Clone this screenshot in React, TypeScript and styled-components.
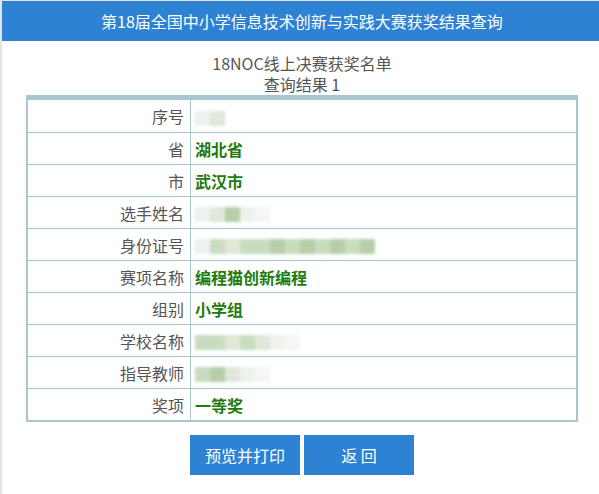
import React from 'react';
import styled, { createGlobalStyle } from 'styled-components';

const GlobalStyle = createGlobalStyle`
  html, body {
    margin: 0;
    padding: 0;
    background: #fff;
    overflow: hidden;
  }
  body {
    font-family: "Noto Sans CJK SC", "Noto Sans", "Liberation Sans", sans-serif;
    font-size: 16px;
  }
`;

const blue = '#2e82d3';
const line = '#a8c6d2';

const Page = styled.div`
  width: 600px;
  min-height: 494px;
  border-left: 2px solid #e4e4e4;
  border-top: 1px solid #e4e4e4;
`;

const Header = styled.div`
  height: 40px;
  background: ${blue};
  color: #fff;
  font-size: 16px;
  display: flex;
  align-items: center;
  justify-content: center;
`;

const Caption = styled.div`
  padding-top: 12px;
  text-align: center;
  color: #555;
  font-size: 16px;
  line-height: 21px;
`;

const ResultTable = styled.div`
  width: 552px;
  margin: 0 auto;
  box-sizing: border-box;
  border-top: 5px solid ${line};
  border-left: 2px solid ${line};
  border-right: 2px solid ${line};
  border-bottom: 2px solid ${line};
`;

const Row = styled.div`
  display: grid;
  grid-template-columns: 163px 1fr;
  height: 32px;
  box-sizing: border-box;
  & + & {
    border-top: 1px solid ${line};
  }
`;

const Label = styled.div`
  display: flex;
  align-items: center;
  justify-content: flex-end;
  padding-right: 6px;
  color: #555;
  border-right: 1px solid ${line};
  white-space: nowrap;
`;

const Value = styled.div`
  display: flex;
  align-items: center;
  padding-left: 4px;
  color: #237a0c;
  font-weight: bold;
`;

const Smudge = styled.div`
  display: flex;
  margin-top: 4px;
  filter: blur(1.4px);
`;

const Tile = styled.span<{ $tone: string }>`
  width: 15px;
  height: 15px;
  background: ${(p) => p.$tone};
`;

const Buttons = styled.div`
  display: flex;
  justify-content: center;
  gap: 4px;
  margin-top: 13px;
`;

const Button = styled.button`
  width: 110px;
  height: 40px;
  border: none;
  background: ${blue};
  color: #fff;
  font-family: inherit;
  font-size: 16px;
  padding: 0;
  cursor: pointer;
`;

// 打码后的字段，用色块拼出来
const tones: Record<string, string> = {
  a: '#eef2ec',
  b: '#dfe8d9',
  c: '#c9dcc0',
  d: '#b6cfaa',
  e: '#f5f7f4',
};

const Blurred: React.FC<{ pattern: string }> = ({ pattern }) => (
  <Smudge>
    {pattern.split('').map((k, i) => (
      <Tile key={i} $tone={tones[k]} />
    ))}
  </Smudge>
);

type Field = { label: string; value?: string; hidden?: string };

const fields: Field[] = [
  { label: '序号', hidden: 'ab' },
  { label: '省', value: '湖北省' },
  { label: '市', value: '武汉市' },
  { label: '选手姓名', hidden: 'abdae' },
  { label: '身份证号', hidden: 'acbccdcdcdcd' },
  { label: '赛项名称', value: '编程猫创新编程' },
  { label: '组别', value: '小学组' },
  { label: '学校名称', hidden: 'ccbcbae' },
  { label: '指导教师', hidden: 'cdbae' },
  { label: '奖项', value: '一等奖' },
];

export default function App() {
  return (
    <Page>
      <GlobalStyle />
      <Header>第18届全国中小学信息技术创新与实践大赛获奖结果查询</Header>
      <Caption>
        <div>18NOC线上决赛获奖名单</div>
        <div>查询结果 1</div>
      </Caption>
      <ResultTable>
        {fields.map((f) => (
          <Row key={f.label}>
            <Label>{f.label}</Label>
            <Value>{f.hidden ? <Blurred pattern={f.hidden} /> : f.value}</Value>
          </Row>
        ))}
      </ResultTable>
      <Buttons>
        <Button>预览并打印</Button>
        <Button>返 回</Button>
      </Buttons>
    </Page>
  );
}
